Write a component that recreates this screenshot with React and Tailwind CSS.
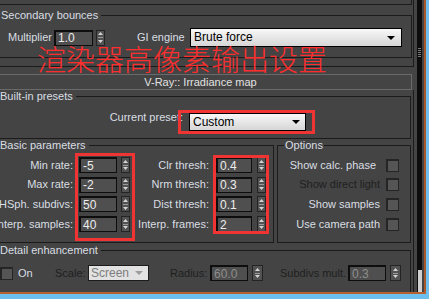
import React from "react";

const Up = () => (
  <svg width="5" height="3" viewBox="0 0 5 3"><path d="M2.5 0L5 3H0Z" fill="#d4d4d4" /></svg>
);
const Down = () => (
  <svg width="5" height="3" viewBox="0 0 5 3"><path d="M0 0H5L2.5 3Z" fill="#d4d4d4" /></svg>
);

function Spinner({ wide }) {
  return (
    <div className={wide ? "flex h-[16px] w-[11px] flex-col border border-[#242424] bg-[#525252]" : "flex h-[16px] w-[9px] flex-col border border-[#242424] bg-[#525252]"}>
      <div className="flex flex-1 items-center justify-center"><Up /></div>
      <div className="mx-auto h-px w-[5px] bg-[#9a9a9a]" />
      <div className="flex flex-1 items-center justify-center"><Down /></div>
    </div>
  );
}

function Field({ v, w, dim }) {
  return (
    <div className={`${w} flex h-[16px] items-center border border-[#0e0e0e] border-t-2 border-l-2 bg-[#4f4f4f] pl-[2px] text-[12px] leading-[14px] ${dim ? "text-[#8e8e8e]" : "text-[#ececec]"}`}>
      {v}
    </div>
  );
}

function Check() {
  return <div className="h-[13px] w-[13px] shrink-0 border border-[#252525] border-t-2 border-l-2 bg-[#555555]" />;
}

function Drop({ text, w }) {
  return (
    <div className={`${w} flex h-[19px] items-center justify-between border border-black bg-gradient-to-b from-[#f8f8f8] to-[#d6d6d6] pl-[3px] pr-[6px] text-[12px] text-black`}>
      <span>{text}</span>
      <svg width="8" height="4" viewBox="0 0 8 4"><path d="M0 0H8L4 4Z" fill="#000" /></svg>
    </div>
  );
}

const LINE = "border-[#1b1b1b]";

function ParamRow({ l1, v1, l2, v2 }) {
  return (
    <div className="flex h-[16px] items-center">
      <span className="flex w-[73px] shrink-0 justify-end whitespace-nowrap">{l1}</span>
      <div className="ml-[6px]"><Field v={v1} w="w-[38px]" /></div>
      <div className="ml-[4px]"><Spinner /></div>
      <span className="flex w-[79px] shrink-0 justify-end whitespace-nowrap">{l2}</span>
      <div className="ml-[7px]"><Field v={v2} w="w-[36px]" /></div>
      <div className="ml-[5px]"><Spinner /></div>
    </div>
  );
}

function OptRow({ label, dim, first }) {
  return (
    <div className="flex h-[16px] items-center justify-end pr-[11px]">
      <span className={`${dim ? "text-[#1f1f1f]" : ""} ${first ? "mr-[10px]" : "mr-[6px]"} whitespace-nowrap`}>{label}</span>
      <Check />
    </div>
  );
}

export default function App() {
  return (
    <div className="relative h-[299px] w-[429px] overflow-hidden bg-[#6dbfee] font-['Liberation_Sans',Arial,sans-serif] text-[11px] leading-[13px] text-[#d9dee3]">
      <div className="flex h-[294px] w-[426px] border-b-2 border-[#b6612f]">
        <div className="flex w-[424px] bg-[#444444]">
          {/* main column */}
          <div className="h-[292px] w-[414px] shrink-0 overflow-hidden">
            {/* rollout 1 */}
            <div className={`h-[67px] w-[414px] border-r border-b ${LINE}`}>
              <div className={`h-[5px] w-[412px] border-r border-b ${LINE}`} />
              <fieldset className={`mt-[4px] w-[412px] border-t border-r border-b ${LINE} pb-[10px]`}>
                <legend className="pl-[1px] pr-[3px]">Secondary bounces</legend>
                <div className="mt-[6px] flex h-[19px] items-center">
                  <span className="w-[46px] pl-[8px] box-content shrink-0 whitespace-nowrap">Multiplier</span>
                  <div className="ml-0"><Field v="1.0" w="w-[39px]" /></div>
                  <div className="ml-[3px]"><Spinner /></div>
                  <span className="ml-[32px] w-[53px] shrink-0 whitespace-nowrap">GI engine</span>
                  <Drop text="Brute force" w="w-[212px]" />
                </div>
              </fieldset>
            </div>

            {/* rollout header */}
            <div className="-ml-[11px] mt-[7px] flex h-[16px] w-[423px] items-center justify-center border border-[#6a6a6a] text-[#e2e2e2]">
              V-Ray:: Irradiance map
            </div>

            {/* rollout 2 */}
            <div className={`w-[414px] border-r ${LINE} h-[220px]`}>
              <fieldset className={`w-[411px] border-t border-r border-b ${LINE} pb-[7px]`}>
                <legend className="pl-0 pr-[3px]">Built-in presets</legend>
                <div className="relative mt-[10px] flex h-[18px] items-start">
                  <span className="-mt-[2px] w-[183px] shrink-0 text-right whitespace-nowrap">Current preset:</span>
                  <div className="ml-[6px] flex h-[18px] w-[117px] items-center justify-between border border-black bg-gradient-to-b from-[#f8f8f8] to-[#d6d6d6] pl-[3px] pr-[5px] text-[12px] text-black">
                    <span>Custom</span>
                    <svg width="8" height="4" viewBox="0 0 8 4"><path d="M0 0H8L4 4Z" fill="#000" /></svg>
                  </div>
                  <div className="absolute left-[178px] top-[-3px] h-[24px] w-[137px] border-[3px] border-[#f03434]" />
                </div>
              </fieldset>

              <div className="relative flex">
                <fieldset className={`w-[274px] shrink-0 border-t border-r border-b ${LINE} pb-[10px]`}>
                  <legend className="pl-0 pr-[3px]">Basic parameters</legend>
                  <div className="mt-[5px] flex flex-col gap-[3.7px]">
                    <ParamRow l1="Min rate:" v1="-5" l2="Clr thresh:" v2="0.4" />
                    <ParamRow l1="Max rate:" v1="-2" l2="Nrm thresh:" v2="0.3" />
                    <ParamRow l1="HSph. subdivs:" v1="50" l2="Dist thresh:" v2="0.1" />
                    <ParamRow l1="Interp. samples:" v1="40" l2="Interp. frames:" v2="2" />
                  </div>
                </fieldset>
                <fieldset className={`ml-[3px] w-[134px] shrink-0 border ${LINE} pb-[10px]`}>
                  <legend className="ml-[6px] px-[1px]">Options</legend>
                  <div className="mt-[5px] flex flex-col gap-[3.7px]">
                    <OptRow label="Show calc. phase" first />
                    <OptRow label="Show direct light" dim />
                    <OptRow label="Show samples" />
                    <OptRow label="Use camera path" />
                  </div>
                </fieldset>
                <div className="absolute left-[75px] top-[14px] h-[88px] w-[60px] border-[3px] border-[#f03434]" />
                <div className="absolute left-[213px] top-[16px] h-[79px] w-[56px] border-[3px] border-[#f03434]" />
              </div>

              <fieldset className={`mt-px w-[411px] border-t border-r ${LINE} pb-[20px]`}>
                <legend className="pl-0 pr-[3px]">Detail enhancement</legend>
                <div className="mt-[8px] flex h-[16px] items-center">
                  <Check />
                  <span className="ml-[5px] w-[37px] shrink-0">On</span>
                  <span className="w-[33px] shrink-0 text-[#1f1f1f]">Scale:</span>
                  <div className="flex h-[16px] w-[61px] items-center justify-between border border-[#1c1c1c] bg-[#e2e2e2] pl-[2px] pr-[5px] text-[12px] text-[#7e7e7e]">
                    <span>Screen</span>
                    <svg width="8" height="4" viewBox="0 0 8 4"><path d="M0 0H8L4 4Z" fill="#9c9c9c" /></svg>
                  </div>
                  <span className="ml-[21px] w-[40px] shrink-0 text-[#1f1f1f]">Radius:</span>
                  <Field v="60.0" w="w-[38px]" dim />
                  <div className="ml-[4px]"><Spinner wide /></div>
                  <span className="ml-[17px] w-[68px] shrink-0 whitespace-nowrap text-[#1f1f1f]">Subdivs mult.</span>
                  <Field v="0.3" w="w-[38px]" dim />
                  <div className="ml-[4px]"><Spinner wide /></div>
                </div>
              </fieldset>
            </div>
          </div>
          {/* gutter */}
          <div className="w-[3px] shrink-0" />
          {/* scrollbar track */}
          <div className="flex w-[5px] shrink-0 flex-col bg-[#0c0c0c]">
            <div className="ml-[1px] mt-[48px] flex w-[3px] flex-col gap-[1px]">
              <div className="h-px bg-[#7a7a7a]" />
              <div className="h-px bg-[#7a7a7a]" />
              <div className="h-px bg-[#7a7a7a]" />
              <div className="h-px bg-[#7a7a7a]" />
              <div className="h-px bg-[#7a7a7a]" />
            </div>
            <div className="ml-[1px] mt-auto h-[22px] w-[4px] bg-[#d0d0d0]" />
          </div>
          <div className="w-[2px] shrink-0" />
        </div>
        <div className="w-[2px] shrink-0 bg-[#a9582c]" />
      </div>

      {/* red annotation text */}
      <div className="pointer-events-none absolute left-[37px] top-[44px] whitespace-nowrap font-['Noto_Sans_CJK_SC',sans-serif] text-[29px] font-light leading-[29px] text-[#ff2e2e]">
        渲染器高像素输出设置
      </div>
    </div>
  );
}
